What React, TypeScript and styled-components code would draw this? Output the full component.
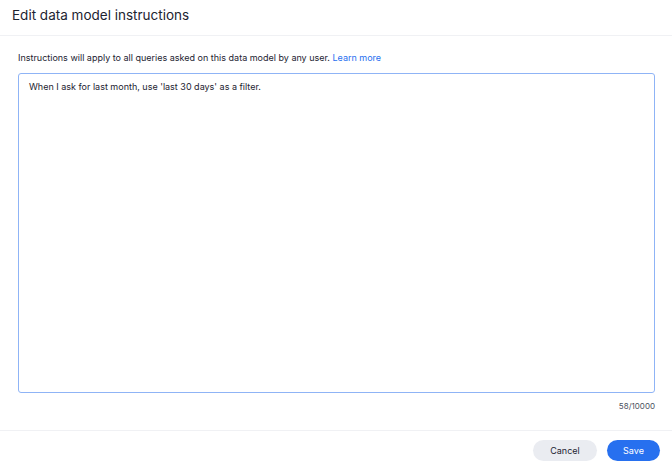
import React from "react";
import styled, { createGlobalStyle } from "styled-components";

const Global = createGlobalStyle`
  html, body { margin: 0; padding: 0; background: #ffffff; }
  body { font-family: Inter, "Open Sans", Arial, sans-serif; color: #1d2331; }
  * { box-sizing: border-box; }
`;

const Dialog = styled.div`
  width: 672px;
  height: 468px;
  display: flex;
  flex-direction: column;
  background: #fff;
`;

const Header = styled.div`
  height: 36px;
  display: flex;
  align-items: center;
  padding: 0 12px 6px;
  border-bottom: 1px solid #f0f1f4;
`;

const Title = styled.h1`
  margin: 0;
  font-size: 13.5px;
  font-weight: 400;
  color: #1d2331;
`;

const Body = styled.div`
  flex: 1;
  display: flex;
  flex-direction: column;
  padding: 16px 17px 0 18px;
`;

const Description = styled.p`
  margin: 0 0 9px;
  font-size: 9px;
  line-height: 12px;
  color: #1d2331;
`;

const Link = styled.a`
  color: #2770ef;
  text-decoration: none;
`;

const TextArea = styled.textarea`
  width: 637px;
  height: 320px;
  resize: none;
  border: 1px solid #8fb4f6;
  border-radius: 3px;
  padding: 7px 10px;
  font-family: Inter, "Open Sans", Arial, sans-serif;
  font-size: 9px;
  line-height: 12px;
  color: #1d2331;
  outline: none;
`;

const Counter = styled.div`
  margin-top: 8px;
  text-align: right;
  font-size: 8px;
  color: #4b5160;
`;

const Footer = styled.div`
  height: 38px;
  border-top: 1px solid #f0f1f4;
  display: flex;
  justify-content: flex-end;
  align-items: flex-start;
  gap: 10px;
  padding: 9px 12px 0 0;
`;

const Button = styled.button<{ $primary?: boolean }>`
  height: 21px;
  border: none;
  border-radius: 11px;
  padding: 0;
  width: ${(p) => (p.$primary ? "53px" : "64px")};
  background: ${(p) => (p.$primary ? "#2770ef" : "#eaecf1")};
  color: ${(p) => (p.$primary ? "#ffffff" : "#1d2331")};
  font-family: Inter, "Open Sans", Arial, sans-serif;
  font-size: 9px;
  cursor: pointer;
`;

export default function App() {
  return (
    <>
      <Global />
      <Dialog>
        <Header>
          <Title>Edit data model instructions</Title>
        </Header>
        <Body>
          <Description>
            Instructions will apply to all queries asked on this data model by any user.{" "}
            <Link href="#">Learn more</Link>
          </Description>
          <TextArea defaultValue="When I ask for last month, use 'last 30 days' as a filter." />
          <Counter>58/10000</Counter>
        </Body>
        <Footer>
          <Button>Cancel</Button>
          <Button $primary>Save</Button>
        </Footer>
      </Dialog>
    </>
  );
}
